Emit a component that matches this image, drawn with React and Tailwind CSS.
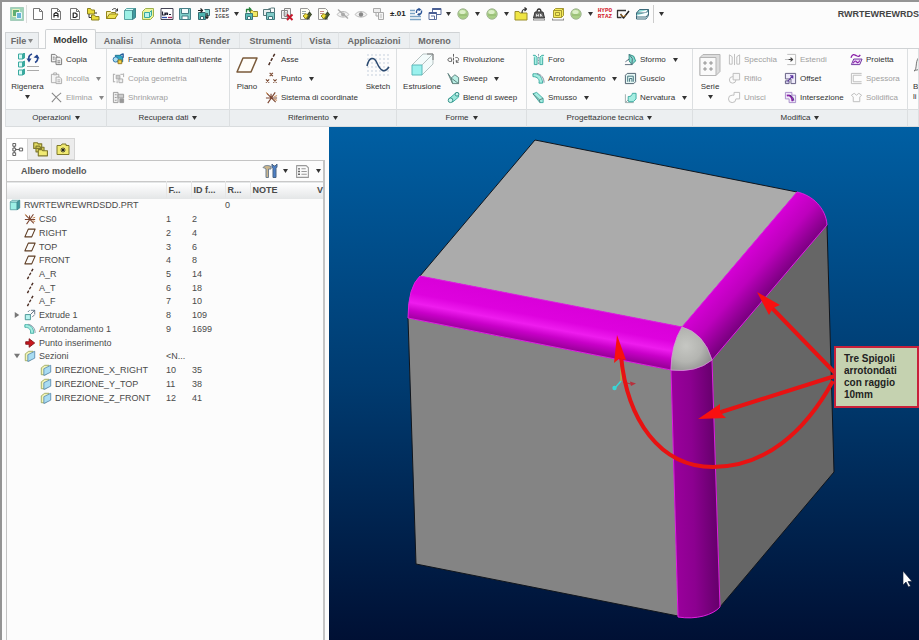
import React, { useState } from 'react';
import clsx from 'clsx';

const TEAL = '#3aa99f';
const MINT = '#9df0e6';

const Svg = ({ children, className = 'h-[13px] w-[13px]', box = '0 0 14 14' }) => (
  <svg
    viewBox={box}
    className={clsx('shrink-0', className)}
    fill="none"
    stroke="#555"
    strokeWidth="1"
    strokeLinejoin="round"
    aria-hidden="true"
  >
    {children}
  </svg>
);

const Caret = ({ muted }) => (
  <svg viewBox="0 0 5 4" className="h-1 w-[5px] shrink-0" aria-hidden="true">
    <path d="M0 0h5L2.500 4z" fill={muted ? '#888' : '#333'} />
  </svg>
);

/* ---------- quick access icons ---------- */

const Page = ({ mark }) => (
  <>
    <path d="M2.500 1.500h6l3 3v8h-9z" fill="#fff" stroke="#777" />
    <path d="M8.500 1.500v3h3" stroke="#777" />
    {mark === 'A' && <path d="M5 10.500V7l2-1.500L9 7v3.500M5 8.500h4" stroke="#222" strokeWidth="1.200" />}
    {mark === 'D' && <path d="M5.200 6h2L9 7.200v2.300l-1.800 1h-2z" stroke="#222" strokeWidth="1.200" />}
  </>
);

const Ball = () => (
  <>
    <circle cx="7" cy="7" r="5.200" fill="#a9cf86" stroke="#a3b795" />
    <ellipse cx="6.500" cy="5" rx="3.200" ry="2" fill="#dcefc8" stroke="none" />
    <path d="M3 8h8" stroke="#8fb46e" />
  </>
);

const Notes = ({ flag }) => (
  <>
    <path d="M1.500 1.500h7l2 2v9h-9z" fill="#fdfdf4" stroke="#999" />
    <path d="M3 4.500h4M3 6.500h3" stroke={flag} />
    <path d="M5.500 11l5-6 2 2.500L9 12z" fill="#4b5b31" stroke="#2d3b20" />
    <path d="M4 9l3-2.500 2 2L7 12z" fill="#f1e03a" stroke="#8d8420" />
  </>
);

const quickIcons = {
  part: (
    <>
      <path d="M1.500 3.500h8v9h-8z" fill={MINT} stroke="#5aa3a5" />
      <path d="M1.500 3.500l2-2h9l-3 2z" fill="#d6fbf7" stroke="#5aa3a5" />
      <path d="M9.500 12.500l3-2v-9l-3 2z" fill="#3f9aa0" stroke="#3d8589" />
    </>
  ),
  folders: (
    <>
      <path d="M1.500 1.500h3l1 1.500h3v4h-7z" fill="#e9dc3c" stroke="#8a8020" />
      <path d="M5.500 8h3l1 1.500h3.500V13H5.500z" fill="#e9dc3c" stroke="#8a8020" />
      <path d="M3 7v3.500h2M10 7V5" stroke="#333" />
    </>
  ),
  open: (
    <>
      <path d="M1.500 4.500h4l1 1h4v6h-9z" fill="#f7ef9d" stroke="#948519" />
      <path d="M1.500 11.500l3-4.500h8.500l-3 4.500z" fill="#ece04a" stroke="#948519" />
      <path d="M7 3c2-2 4-2 5 .5M12.500 1.500v2.500h-2.500" stroke="#333" />
    </>
  ),
  boxed: (
    <>
      <path d="M1.500 4.500l3-3h8v8l-3 3h-8z" fill="#eef59b" stroke="#9db04e" />
      <path d="M3.500 5.500h5v5h-5zM8.500 5.500l2-2v5l-2 2" fill="#bdf3ee" stroke={TEAL} />
    </>
  ),
  monitor: (
    <>
      <path d="M1 1.500h12v11H1z" fill="#fff" stroke="#445" />
      <path d="M2.500 4.500v3.500h2.500V5.500M6 8V6h1.500v2M9 7.500h2" stroke="#223" strokeWidth="1.200" />
      <path d="M2 10.500h5" stroke="#2e4fae" strokeWidth="1.300" />
      <path d="M8 10.500h4" stroke="#a82a5c" strokeWidth="1.300" />
    </>
  ),
  save: (
    <>
      <path d="M1.500 1.500h11v11h-11z" fill="#7ecdc8" stroke="#457e86" />
      <path d="M3.500 1.500h7v5h-7z" fill="#f3fbfb" stroke="#457e86" />
      <path d="M4 9h6v3.500H4z" fill="#fff" stroke="#457e86" />
    </>
  ),
  saveCopy: (
    <>
      <path d="M1.500 5.500h7v7h-7z" fill="#4cb5b0" stroke="#376b73" />
      <path d="M3.500 9.500h3v3h-3z" fill="#fff" stroke="#376b73" />
      <path d="M7.500 2.500h5v6h-3" fill="#8ed8d3" stroke="#376b73" />
      <path d="M1 3.500h4M3.500 1.500l2 2-2 2M10 6v5M8.500 9.500l1.500 2 1.500-2" stroke="#222" strokeWidth="1.200" />
    </>
  ),
  export: (
    <>
      <path d="M6.500 3.500h2l1 1h4v5h-7z" fill="#f3ea68" stroke="#998b28" />
      <path d="M1.500 6.500h7v6h-7z" fill="#59bdb7" stroke="#3d777c" />
      <path d="M3.500 9.500h3v3h-3z" fill="#fff" stroke="#3d777c" />
      <path d="M2.500 5.500v-3h4M5 .5l2 2-2 2" stroke="#25803a" strokeWidth="1.300" />
    </>
  ),
  mirrorSave: (
    <>
      <path d="M1.500 2.500h7v6h-7z" fill="#e8eeee" stroke="#56787b" />
      <path d="M4.500 5.500h8v7h-8z" fill="#7fcac6" stroke="#3f777b" />
      <path d="M6.500 9.500h4v3h-4z" fill="#fff" stroke="#3f777b" />
      <path d="M5.500 2.500l4-1.500h3v4.500" stroke="#56787b" />
    </>
  ),
  erase: (
    <>
      <path d="M1.500 3.500h6v8h-6zM4.500 1.500h6v8h-6z" fill="#f2f2f2" stroke="#888" />
      <path d="M3 6h5M3 8h5" stroke="#aaa" />
      <path d="M7 7.500l5.500 5.500M12.500 7.500L7 13" stroke="#c5162a" strokeWidth="1.900" />
    </>
  ),
  notesA: <Notes flag="#9aa" />,
  notesB: <Notes flag="#c88" />,
  hide: (
    <>
      <path d="M1 7.500c3-4 9-4 12 0-3 3.500-9 3.500-12 0z" fill="#f1f1f1" stroke="#bbb" />
      <circle cx="7" cy="7.500" r="2" fill="#aaa" stroke="none" />
      <path d="M2 2.500l10 9" stroke="#aaa" strokeWidth="1.300" />
    </>
  ),
  show: (
    <>
      <path d="M1 7.500c3-4 9-4 12 0-3 3.500-9 3.500-12 0z" fill="#f1f1f1" stroke="#bbb" />
      <circle cx="7" cy="7.500" r="2.200" fill="#888" stroke="none" />
    </>
  ),
  layers: (
    <>
      <path d="M1.500 1.500h7v4h-7z" fill="#eee" stroke="#aaa" />
      <path d="M6.500 5.500h5v7h-5zM4 5.500V9h2.500" fill="#f3f3f3" stroke="#aaa" />
      <path d="M8 8h2M8 10h2" stroke="#bbb" />
    </>
  ),
  regen: (
    <>
      <path d="M1 3.500h5M1 6.500h5M1 9.500h11M1 12.500h11" stroke="#7ba3c4" strokeWidth="1.500" />
      <path d="M7.500 6C7 3 9 1.500 11 2.500M12.500 3.500c.5 2.500-1 4-3 4" stroke="#2c5596" strokeWidth="1.400" />
      <path d="M9.500 .8l3 2-3 1.500zM10.500 5.800l-2.500 1.600 2.500 1.500z" fill="#2c5596" stroke="none" />
    </>
  ),
  windows: (
    <>
      <path d="M4.500 1.500h8.500v6H4.500z" fill="#fff" stroke="#5c6f9c" />
      <path d="M4.500 2h8.500" stroke="#4a5f94" strokeWidth="2" />
      <path d="M1 5.500h7.500v7H1z" fill="#fff" stroke="#5c6f9c" />
      <path d="M1 6h7.500" stroke="#4a5f94" strokeWidth="2" />
      <path d="M3 9h3.500v3.500" stroke="#5c6f9c" />
    </>
  ),
  ball: <Ball />,
  folderUp: (
    <>
      <path d="M1 4.500h4l1 1.500h7v7H1z" fill="#efe545" stroke="#9a8e2a" />
      <path d="M8 6c0-3 1-4 4-4M10.500 .5l2 1.500-2 2" stroke="#333" strokeWidth="1.200" />
    </>
  ),
  weight: (
    <>
      <path d="M3 5h8l1.500 6h-11z" fill="#666" stroke="#333" />
      <path d="M5 5c0-4 4-4 4 0" stroke="#333" strokeWidth="1.300" />
      <path d="M4.500 9.500V7.500l1 1 1-1v2M8.500 9.500V7l1.500 2.500" stroke="#fff" strokeWidth=".8" />
      <path d="M1 13h12M1.500 11.500V13M12.500 11.500V13" stroke="#888" />
    </>
  ),
  bbox: (
    <>
      <path d="M2.500 3.500l2-2h8v7l-2 2h-8z" fill="#f3ea5c" stroke="#a59932" />
      <path d="M2.500 3.500h8v7M10.500 3.500l2-2M4.500 8.500h4v-3h-4z" stroke="#a59932" />
      <path d="M1 13h12M1.500 11.500V13M12.500 11.500V13" stroke="#888" />
    </>
  ),
  check: (
    <>
      <path d="M10 3.500H1.500v7h4" stroke="#333" strokeWidth="1.300" />
      <path d="M4.500 7l3 4L13 4" stroke="#222" strokeWidth="1.500" />
      <path d="M4.500 7l3 3 2-2" stroke="#d08a2b" />
    </>
  ),
  books: (
    <>
      <path d="M1.500 6l3-3.500h9L11 6zM1.500 6v2.500H11L13.500 5V2.500" fill="#8fdcd8" stroke="#3b6a7a" />
      <path d="M1.500 8.500V12H11l2.500-3.500V5M1.500 10H11l2.500-3" fill="#f8ffff" stroke="#3b6a7a" />
    </>
  ),
};

const quickItems = [
  'new', 'newA', 'newD', 'folders', 'open', 'part', 'boxed', 'monitor', 'save', 'saveCopy', 'step', '|v',
  'export', 'mirrorSave', 'erase', 'notesA', 'notesB', 'hide', 'show', 'layers', 'tol', 'regen', 'windows', '|v',
  'ball', '|v', 'ball', '|v', 'folderUp', 'weight', 'bbox', 'ball', '|v', 'hypo', 'check', 'books', '|', '|v',
];

const QuickItem = ({ id }) => {
  if (id === '|') return <span className="h-[18px] w-px bg-[#ccc]" />;
  if (id === '|v') {
    return (
      <button type="button" aria-label="Altro" className="flex w-[6px] justify-center">
        <Caret />
      </button>
    );
  }
  if (id === 'step') {
    return (
      <button type="button" className="flex w-[14px] justify-center text-center font-['Liberation_Mono',monospace] text-[6px] leading-[6px] text-[#222]">
        STEP IGES
      </button>
    );
  }
  if (id === 'hypo') {
    return (
      <button type="button" className="flex w-[14px] justify-center text-center font-['Liberation_Mono',monospace] text-[6px] leading-[6px] font-bold text-[#d3202c]">
        HYPO RTAZ
      </button>
    );
  }
  if (id === 'tol') {
    return (
      <button type="button" className="flex w-[14px] justify-center text-[8px] leading-3 font-bold text-[#222]">
        ±.01
      </button>
    );
  }
  return (
    <button type="button" aria-label={id} className="w-[14px]">
      <Svg className="h-[14px] w-[14px]">
        {id === 'new' && <Page />}
        {id === 'newA' && <Page mark="A" />}
        {id === 'newD' && <Page mark="D" />}
        {quickIcons[id]}
      </Svg>
    </button>
  );
};

/* ---------- ribbon icons ---------- */

const ic = {
  copy: (
    <g fill="#f2f2f2" stroke="#777">
      <path d="M1.500 1.500h4l2 2v6h-6z" />
      <path d="M6.500 4.500h4l2 2v6h-6z" />
      <path d="M8 8.500h3M8 10.500h3M3 4.500h2M3 6.500h2" />
    </g>
  ),
  paste: (
    <g fill="#f4f4f4" stroke="#aaa">
      <path d="M1.500 2.500h8v9h-8z" />
      <path d="M4 1h3v2H4zM6.500 5.500h4l2 2v5h-6z" />
      <path d="M8 8.500h3M8 10.500h3" />
    </g>
  ),
  remove: <path d="M2 2l10 10M12 2C9 4 5 8 2 12" stroke="#888" strokeWidth="1.200" />,
  udf: (
    <>
      <path d="M3.500 2.500h6l2 2v5h-6z" fill="#2da7c4" stroke="#1b6f8c" />
      <circle cx="4" cy="7" r="2.800" fill="#a8dff0" stroke="#2c6fa8" />
      <path d="M6.500 7.500h4v4h-4z" fill="#f0d64a" stroke="#99741b" />
      <path d="M9 2l3-1v4" stroke="#235c9c" strokeWidth="1.500" />
    </>
  ),
  copyGeom: (
    <g stroke="#aaa">
      <path d="M1.500 2v9M1.500 2.500h2M1.500 10.500h2M12.500 1.500v4" />
      <path d="M4.500 3.500h4v4h-4z" fill="#ccc" />
      <path d="M7.500 7.500h4v4h-4z" fill="#eee" />
      <path d="M9 2.500h3M5.500 9v3" />
    </g>
  ),
  shrink: (
    <g stroke="#999">
      <path d="M1.500 1.500h5v11h-5z" fill="#eee" />
      <path d="M6.500 3.500h6v4h-6z" fill="#ccc" />
      <path d="M8.500 8.500h4v4h-4z" fill="#999" />
      <path d="M3 4h2M3 7h2M3 10h2" />
    </g>
  ),
  axis: <path d="M10.500 1L8.800 4M8 5.500L6.300 8.500M5.500 10L4 13" stroke="#4a2c22" strokeWidth="1.600" />,
  point: (
    <path
      d="M5 1l3.500 3.500M8.500 1L5 4.500M1 8l3.500 3.500M4.500 8L1 11.500M9 8l3.500 3.500M12.500 8L9 11.500"
      stroke="#7b4a32"
      strokeWidth="1.200"
    />
  ),
  csys: (
    <>
      <path d="M2 2.500l9.500 9.500M11 1.500L3 13M1 7.500h12M6.500 3v5" stroke="#7b4530" strokeWidth="1.200" />
      <path d="M1 1.500l2.500 2M10 6l3-1M10 9l3 1" stroke="#c07a3c" />
    </>
  ),
  revolve: (
    <>
      <path d="M7 1v12" stroke="#555" strokeDasharray="3 1" />
      <path d="M5 5.500C2 5 .8 6 1 7.500s2 2 4 1.500V6" />
      <path d="M9 5c4-1 5 3 1 4.500M10 7.500v2.500h2.500" />
    </>
  ),
  sweep: (
    <>
      <path d="M1 1.500l3.500 5 4-3.500 4 3v6.500H6z" fill="#b9efe5" stroke="#5b7d79" />
      <path d="M4.500 6.500L12.500 12.500M4.500 6.500l1.500 6" stroke="#5b7d79" />
    </>
  ),
  blend: (
    <>
      <path d="M2 8.500L9 2.500h3.500v4L6 12" fill="#9ae6d9" stroke={TEAL} />
      <circle cx="3.800" cy="10" r="2.500" fill="#c8f5ee" stroke="#2c8c83" />
      <circle cx="10.800" cy="3.500" r="2" fill="#c8f5ee" stroke="#2c8c83" />
    </>
  ),
  hole: (
    <>
      <path d="M1 2.500h2.500l2 2v8h-3v-8M13 2.500h-2.500l-2 2v8h3v-8" fill="#a9efe4" stroke={TEAL} />
      <path d="M7 1v12" stroke="#89a" strokeDasharray="2 1" />
    </>
  ),
  round: (
    <>
      <path d="M1 2c5-1 10 2 10.500 10h-4C8.500 8 6 5 1 5z" fill="#a5eee2" stroke={TEAL} />
      <path d="M5 1.500c5 1 8 5 8 10" stroke="#789" />
    </>
  ),
  chamfer: (
    <>
      <path d="M1 3l4-1.500L12 8v4.500H8.500z" fill="#a5eee2" stroke={TEAL} />
      <path d="M1 3l7 6.500L12 8M8 9.500l.5 3" stroke="#57807d" />
    </>
  ),
  draft: (
    <>
      <path d="M5.500 1.500l5 2 2 5-4 4-3-4z" fill="#7fdccf" stroke="#2c8c83" />
      <path d="M1 12.500h8M1.500 9.500l4-3M5.500 1.500L9 6l-.5 6.500" stroke="#567" />
    </>
  ),
  shell: (
    <>
      <path d="M1.500 3.500l2-2h9v9l-2 2h-9z" fill="#e5f7f4" stroke="#4a5b6a" />
      <path d="M4 10.500V4.500h6v6M6 10.500V7h2.500v3.500" stroke="#3c6f7a" />
    </>
  ),
  rib: (
    <>
      <path d="M1.500 3.500v9h9M1.500 12.500l3-3" stroke="#9aa" />
      <path d="M4.500 9.500V6c3 0 4-1 4.500-3.500h4v6l-3 3h-5z" fill="#a5eee2" stroke={TEAL} />
    </>
  ),
  mirror: <path d="M1.500 2l3 2v8h-3zM12.500 2l-3 2v8h3zM7 1v12" stroke="#bbb" />,
  trim: (
    <g stroke="#bbb">
      <circle cx="5" cy="8.500" r="3.500" />
      <path d="M5.500 1.500h7v7h-7z" fill="#f7f7f7" />
    </g>
  ),
  merge: (
    <g stroke="#bbb">
      <path d="M6.500 1.500h6v7h-4a4 4 0 1 1-4-4h2z" />
    </g>
  ),
  extend: (
    <>
      <path d="M3.500 1.500h9v11h-9" stroke="#bbb" />
      <path d="M1 7h6" stroke="#bbb" />
      <path d="M5 7h4M7 5l2.200 2L7 9" stroke="#444" strokeWidth="1.300" />
    </>
  ),
  offset: (
    <>
      <path d="M1.500 1.500h11v11h-5v-5h-6z" fill="#eeeafa" stroke="#5d587c" />
      <path d="M1.500 9.500h4v3h-4z" fill="#d5cdf0" stroke="#5d587c" />
      <path d="M4 10l5.500-6M6.500 4h3v3" stroke="#5b35a0" strokeWidth="1.200" />
    </>
  ),
  intersect: (
    <>
      <path d="M1.500 1.500h7v3h4v8h-7v-4h-4z" fill="#f1eafa" stroke="#a58bc8" />
      <path d="M3 5c4-1 6 2 6 6" stroke="#8a1fa8" strokeWidth="1.900" />
      <path d="M6 4.500c3 1 4.500 3 4.500 6" stroke="#3c2b78" />
    </>
  ),
  project: (
    <>
      <path d="M1 5c2-5 4-3 6-2s3 1 4-1" stroke="#8a1fa8" strokeWidth="1.400" />
      <path d="M4 6.500h9l-2.500 6H1.500z" fill="#ead8f6" stroke="#6b2e9c" />
      <path d="M3.500 11c2-4 3-2 4-1s2 0 3-2" stroke="#8a1fa8" strokeWidth="1.200" />
    </>
  ),
  thicken: <path d="M12.500 1.500h-11v11h11M12.500 3.500h-9v7h9" stroke="#bbb" />,
  solidify: <path d="M1.500 4.500l3-2 2.500 2 2.500-2 3 2-2 2v5h-7v-5z" stroke="#bbb" />,
};

const Regenerate = () => (
  <Svg className="h-6 w-6" box="0 0 24 24">
    {[1, 9, 17].map((y) => (
      <g key={y} stroke={TEAL}>
        <path d={`M2.500 ${y}h4v5h-4z`} fill="#d8faf6" />
        <path d={`M6.500 ${y}l2-1v5l-2 1`} fill={TEAL} />
      </g>
    ))}
    <path d="M13 8c-1-4 0-6 3-7M21 2.500c1.500 3 .5 6-2 7" stroke="#27478f" strokeWidth="1.600" />
    <path d="M10.500 5.500l2.500 4 2.500-4zM17.500 4.500l3.500-3 2.500 4z" fill="#27478f" stroke="none" />
    <path d="M11 13.500h12M11 17.500h12" stroke="#aaa" />
  </Svg>
);

const Plane = () => (
  <Svg className="h-6 w-6" box="0 0 24 24">
    <path d="M8 5h14l-6 14H2z" fill="#fffdf8" stroke="#7a5a3a" strokeWidth="1.500" />
  </Svg>
);

const Sketch = () => (
  <Svg className="h-6 w-6" box="0 0 24 24">
    {[2, 6, 10, 14, 18, 22].map((y) => (
      <path key={y} d={`M1.500 ${y}h22`} stroke="#8ea3bd" strokeDasharray="1 3" />
    ))}
    <path d="M1 13C3 4 8 3 11 10s7 11 12 4" stroke="#2c4a70" strokeWidth="1.500" />
  </Svg>
);

const Extrude = () => (
  <Svg className="h-6 w-6" box="0 0 24 24">
    <path d="M2 12L13 1h10v10L12 22M12 12L23 1" fill="#f3fbfb" stroke="#b5c1c1" />
    <path d="M17 1h6v6" stroke="#777" />
    <path d="M2 12h10v10H2z" fill="#9af1ee" stroke="#5bb9b9" />
  </Svg>
);

const Pattern = () => (
  <Svg className="h-6 w-6" box="0 0 24 24">
    <path d="M2 4.500L5 1.500h17v17l-4 4H2z" fill="#dcdcdc" stroke="#b5b5b5" />
    <path d="M2 4.500h16v18H2z" fill="#fafafa" stroke="#b5b5b5" />
    {[[7, 10], [13, 10], [7, 16], [13, 16]].map(([x, y]) => (
      <circle key={`${x}-${y}`} cx={x} cy={y} r="1.200" fill="#ccc" stroke="#999" />
    ))}
  </Svg>
);

const Boundary = () => (
  <Svg className="h-6 w-6" box="0 0 24 24">
    <path d="M1 18C5 16 1 6 8 3l12 10c-6 0-6 3-8 7C9 16 5 16 1 18z" fill="#f2f2f2" stroke="#777" />
  </Svg>
);

const Cmd = ({ icon, label, menu, off }) => (
  <button
    type="button"
    disabled={off}
    className={clsx(
      'flex h-[19px] items-center gap-[3px] text-[8px] leading-3 whitespace-nowrap',
      off ? 'text-[#a0a0a0]' : 'text-[#333]'
    )}
  >
    <Svg>{ic[icon]}</Svg>
    <span>{label}</span>
    {menu && (
      <span className="pl-1">
        <Caret muted={off} />
      </span>
    )}
  </button>
);

const Big = ({ icon, label, menu, className }) => (
  <button
    type="button"
    className={clsx('flex shrink-0 flex-col items-center pt-[3px] text-[8px] leading-3 text-[#333]', className)}
  >
    {icon}
    <span className="pt-1">{label}</span>
    {menu && (
      <span className="flex h-2 items-center">
        <Caret />
      </span>
    )}
  </button>
);

const Col = ({ items, className }) => (
  <div className={clsx('flex shrink-0 flex-col items-start', className)}>
    {items.map((item) => (
      <Cmd key={item.label} {...item} />
    ))}
  </div>
);

const Group = ({ title, className, children }) => (
  <section className={clsx('flex flex-col border-r border-[#dcdfe1]', className)}>
    <div className="flex h-[60px] items-start pt-px">{children}</div>
    <button
      type="button"
      aria-label={title || 'Superfici'}
      className="flex h-[18px] items-center justify-center gap-1 border-y border-[#d9dcde] bg-[#eceff1] text-[8px] leading-3 text-[#333]"
    >
      {title}
      {title && <Caret />}
    </button>
  </section>
);

const Ribbon = () => (
  <div className="flex overflow-hidden border-l border-[#dcdfe1]">
    <Group title="Operazioni" className="w-[101px] shrink-0">
      <Big icon={<Regenerate />} label="Rigenera" menu className="ml-[3px] w-[37px]" />
      <Col
        className="ml-1"
        items={[
          { icon: 'copy', label: 'Copia' },
          { icon: 'paste', label: 'Incolla', menu: true, off: true },
          { icon: 'remove', label: 'Elimina', menu: true, off: true },
        ]}
      />
    </Group>
    <Group title="Recupera dati" className="w-[123px] shrink-0">
      <Col
        className="ml-[5px]"
        items={[
          { icon: 'udf', label: "Feature definita dall'utente" },
          { icon: 'copyGeom', label: 'Copia geometria', off: true },
          { icon: 'shrink', label: 'Shrinkwrap', off: true },
        ]}
      />
    </Group>
    <Group title="Riferimento" className="w-[167px] shrink-0">
      <Big icon={<Plane />} label="Piano" className="w-[34px]" />
      <Col
        className="ml-px w-[95px]"
        items={[
          { icon: 'axis', label: 'Asse' },
          { icon: 'point', label: 'Punto', menu: true },
          { icon: 'csys', label: 'Sistema di coordinate' },
        ]}
      />
      <Big icon={<Sketch />} label="Sketch" className="w-[36px]" />
    </Group>
    <Group title="Forme" className="w-[130px] shrink-0">
      <Big icon={<Extrude />} label="Estrusione" className="ml-[3px] w-[44px]" />
      <Col
        className="ml-[3px]"
        items={[
          { icon: 'revolve', label: 'Rivoluzione' },
          { icon: 'sweep', label: 'Sweep', menu: true },
          { icon: 'blend', label: 'Blend di sweep' },
        ]}
      />
    </Group>
    <Group title="Progettazione tecnica" className="w-[166px] shrink-0">
      <Col
        className="ml-[5px] w-[92px]"
        items={[
          { icon: 'hole', label: 'Foro' },
          { icon: 'round', label: 'Arrotondamento', menu: true },
          { icon: 'chamfer', label: 'Smusso', menu: true },
        ]}
      />
      <Col
        items={[
          { icon: 'draft', label: 'Sformo', menu: true },
          { icon: 'shell', label: 'Guscio' },
          { icon: 'rib', label: 'Nervatura', menu: true },
        ]}
      />
    </Group>
    <Group title="Modifica" className="w-[215px] shrink-0">
      <Big icon={<Pattern />} label="Serie" menu className="w-[34px]" />
      <Col
        className="ml-px w-[56px]"
        items={[
          { icon: 'mirror', label: 'Specchia', off: true },
          { icon: 'trim', label: 'Rifilo', off: true },
          { icon: 'merge', label: 'Unisci', off: true },
        ]}
      />
      <Col
        className="w-[66px]"
        items={[
          { icon: 'extend', label: 'Estendi', off: true },
          { icon: 'offset', label: 'Offset' },
          { icon: 'intersect', label: 'Intersezione' },
        ]}
      />
      <Col
        items={[
          { icon: 'project', label: 'Proietta' },
          { icon: 'thicken', label: 'Spessora', off: true },
          { icon: 'solidify', label: 'Solidifica', off: true },
        ]}
      />
    </Group>
    <Group title="" className="min-w-0 flex-1 overflow-hidden">
      <button type="button" className="ml-[5px] pt-[3px] text-left text-[8px] leading-[10px] text-[#333]">
        <Boundary />
        <span className="block pt-[5px]">B</span>
        <span className="block">li</span>
      </button>
    </Group>
  </div>
);

/* ---------- model tree ---------- */

const treeIcons = {
  part: quickIcons.part,
  csys: ic.csys,
  plane: <path d="M5 2.500h8l-4 9H1z" stroke="#5e3c22" strokeWidth="1.300" />,
  axis: ic.axis,
  extrude: (
    <>
      <path d="M1.500 6.500h6v6h-6z" fill="#b9f4f0" stroke="#3c8b8b" />
      <path d="M4.500 3.500l2-2M9.500 9.500l3-3M7.500 6.500l5-5M8 1.500h4.500V6" stroke="#567" />
    </>
  ),
  round: ic.round,
  insert: <path d="M2 5.500h4V2l6.500 5L6 12V8.500H2z" fill="#c8171f" stroke="#7f1015" />,
  section: (
    <>
      <path d="M1.500 4.500l4-3h5v8l-4 3h-5z" fill="#f3f5b8" stroke="#9aa65a" />
      <path d="M4.500 5.500l8-4v8l-8 4z" fill="#a9dcf2" stroke="#5a8ab0" />
    </>
  ),
};

const treeRows = [
  { icon: 'part', name: 'RWRTEWREWRDSDD.PRT', level: 0, r: '0' },
  { icon: 'csys', name: 'CS0', level: 1, n: '1', id: '2' },
  { icon: 'plane', name: 'RIGHT', level: 1, n: '2', id: '4' },
  { icon: 'plane', name: 'TOP', level: 1, n: '3', id: '6' },
  { icon: 'plane', name: 'FRONT', level: 1, n: '4', id: '8' },
  { icon: 'axis', name: 'A_R', level: 1, n: '5', id: '14' },
  { icon: 'axis', name: 'A_T', level: 1, n: '6', id: '18' },
  { icon: 'axis', name: 'A_F', level: 1, n: '7', id: '10' },
  { icon: 'extrude', name: 'Extrude 1', level: 1, n: '8', id: '109', toggle: 'closed' },
  { icon: 'round', name: 'Arrotondamento 1', level: 1, n: '9', id: '1699' },
  { icon: 'insert', name: 'Punto inserimento', level: 1 },
  { icon: 'section', name: 'Sezioni', level: 1, n: '<N...', toggle: 'open' },
  { icon: 'section', name: 'DIREZIONE_X_RIGHT', level: 2, n: '10', id: '35' },
  { icon: 'section', name: 'DIREZIONE_Y_TOP', level: 2, n: '11', id: '38' },
  { icon: 'section', name: 'DIREZIONE_Z_FRONT', level: 2, n: '12', id: '41' },
];

const levelPad = ['pl-[2px]', 'pl-[6px]', 'pl-[33px]'];

const Columns = () => (
  <colgroup>
    <col className="w-[159px]" />
    <col className="w-[25px]" />
    <col className="w-[34px]" />
    <col className="w-[25px]" />
    <col className="w-[67px]" />
    <col />
  </colgroup>
);

const ModelTree = () => (
  <aside className="flex w-[323px] shrink-0 flex-col pt-[11px]">
    <div className="flex h-[22px]">
      <button type="button" aria-label="Struttura" className="flex w-[22px] items-center justify-center border border-b-0 border-[#d5d5d5] bg-white">
        <Svg>
          <path d="M2 .5h3v3H2zM2 5.500h3v3H2zM2 10.500h3v3H2zM9 5.500h3.500v3H9zM5 7h4M3.500 3.500v2M3.500 8.500v2" />
        </Svg>
      </button>
      <button type="button" aria-label="Cartelle" className="flex w-6 items-center justify-center border-y border-r border-[#d5d5d5] bg-[#ececec]">
        <Svg className="h-4 w-4">
          <path d="M1.500 1.500h3l1 1h3v4h-7zM3.500 4.500h3l1 1h3v4h-7z" fill="#e5dd62" stroke="#7f782b" />
          <path d="M5.500 7.500h3l1 1h4v4.500h-8z" fill="#f1ea72" stroke="#7f782b" />
        </Svg>
      </button>
      <button type="button" aria-label="Preferiti" className="flex w-[23px] items-center justify-center border-y border-r border-[#d5d5d5] bg-[#ececec]">
        <Svg className="h-[14px] w-[14px]">
          <path d="M1 3.500h4l1-1.500h4v1.500h3v9H1z" fill="#f1ea72" stroke="#7f782b" />
          <path d="M7 5.500v5M4.500 8h5M5.300 6.300l3.400 3.400M8.700 6.300L5.300 9.700" stroke="#222" />
        </Svg>
      </button>
    </div>
    <div className="mr-1 flex flex-1 flex-col border-t border-r-2 border-l border-[#c4c4c4]">
      <div className="flex h-5 items-center pr-[2px] pl-[14px]">
        <h2 className="flex-1 text-[9px] leading-3 font-bold text-[#555]">Albero modello</h2>
        <button type="button" aria-label="Impostazioni" className="flex items-center gap-[5px]">
          <Svg className="h-4 w-4" box="0 0 16 16">
            <path d="M1 4.500C3 2 6 2 9 3.500V6H6.500v8.500H4V6C3 5 2 5 1 4.500z" fill="#c9b48a" stroke="#6f7f90" />
            <path d="M10 1v3l1 1.500V14.500h3V5.500L15 4V1l-2 2h-1z" fill="#4c7fc6" stroke="#4b6483" />
          </Svg>
          <Caret />
        </button>
        <button type="button" aria-label="Mostra" className="ml-[7px] flex items-center gap-[6px]">
          <Svg className="h-[15px] w-[15px]">
            <path d="M1.500 1.500h9l2 2v9h-11z" fill="#fafafa" stroke="#999" />
            <path d="M3 4.500h1.500M3 7h1.500M3 9.500h1.500" stroke="#444" strokeWidth="1.300" />
            <path d="M6 4.500h4M6 7h5M6 9.500h5" stroke="#999" />
          </Svg>
          <Caret />
        </button>
      </div>
      <table className="w-full table-fixed border-collapse text-left text-[9px] leading-3 text-[#4a4a4a]">
        <Columns />
        <thead>
          <tr className="h-[17px] border-t border-[#c9c9c9] bg-linear-to-b from-white to-[#e4e6e7] font-bold">
            <th scope="col" aria-label="Nome" />
            <th scope="col" className="border-l border-[#e6e6e6] pl-[2px]">F...</th>
            <th scope="col" className="border-l border-[#e6e6e6] pl-[2px]">ID f...</th>
            <th scope="col" className="border-l border-[#e6e6e6] pl-[2px]">R...</th>
            <th scope="col" className="border-l border-[#e6e6e6] pl-[2px]">NOTE</th>
            <th scope="col" className="p-0">V</th>
          </tr>
        </thead>
      </table>
      <table className="h-[206px] w-full table-fixed border-collapse text-left text-[9px] leading-3 text-[#4a4a4a]">
        <Columns />
        <tbody>
          {treeRows.map((row) => (
            <tr key={row.name}>
              <td className="p-0">
                <div className={clsx('flex h-3 items-center gap-[3px] whitespace-nowrap', levelPad[row.level])}>
                  {row.level === 1 && (
                    <span className="flex w-2 justify-center">
                      {row.toggle && (
                        <svg viewBox="0 0 8 8" className="h-[6px] w-[6px] shrink-0" aria-hidden="true">
                          <path d={row.toggle === 'open' ? 'M0 1h8L4 7z' : 'M1 0l6 4-6 4z'} fill="#777" />
                        </svg>
                      )}
                    </span>
                  )}
                  <Svg className="h-3 w-3">{treeIcons[row.icon]}</Svg>
                  <span>{row.name}</span>
                </div>
              </td>
              <td className="p-0">{row.n}</td>
              <td className="p-0 pl-px">{row.id}</td>
              <td className="p-0">{row.r}</td>
              <td className="p-0" />
              <td className="p-0" />
            </tr>
          ))}
        </tbody>
      </table>
    </div>
  </aside>
);

/* ---------- graphics area ---------- */

const Scene = () => (
  <svg viewBox="329 127 590 513" className="block h-[513px] w-[590px]" fill="none" role="img" aria-label="Cubo con tre spigoli arrotondati">
    <defs>
      <linearGradient id="edgeFront" gradientUnits="userSpaceOnUse" x1="535" y1="298" x2="527" y2="341">
        <stop offset="0" stopColor="#d900d9" />
        <stop offset=".4" stopColor="#de02de" />
        <stop offset=".62" stopColor="#ee1cee" />
        <stop offset=".8" stopColor="#c800c8" />
        <stop offset="1" stopColor="#9c009c" />
      </linearGradient>
      <linearGradient id="edgeSide" gradientUnits="userSpaceOnUse" x1="740" y1="258" x2="774" y2="288">
        <stop offset="0" stopColor="#d600d6" />
        <stop offset=".45" stopColor="#bd00bd" />
        <stop offset="1" stopColor="#78007e" />
      </linearGradient>
      <linearGradient id="edgeDown" gradientUnits="userSpaceOnUse" x1="674" y1="490" x2="716" y2="489">
        <stop offset="0" stopColor="#9a009c" />
        <stop offset=".45" stopColor="#8c0090" />
        <stop offset="1" stopColor="#66006c" />
      </linearGradient>
      <radialGradient id="corner" gradientUnits="userSpaceOnUse" cx="686" cy="346" r="32">
        <stop offset="0" stopColor="#c6c7c3" />
        <stop offset=".5" stopColor="#b4b5b1" />
        <stop offset="1" stopColor="#858585" />
      </radialGradient>
    </defs>

    <path d="M535 140L797 192L682 327L420 276z" fill="#ababab" />
    <path d="M408 318L671 370L678 616L416 564z" fill="#848484" />
    <path d="M827 225L712 360L720 607L834 472z" fill="#666" />
    <path d="M420 276L535 140L797 192M827 225L834 472L720 607M678 616L416 564L408 318" stroke="#10151c" />

    <g stroke="#e020e0">
      <path d="M420 276L682 327Q671 345 671 370L408 318Q408 287 420 276z" fill="url(#edgeFront)" />
      <path d="M682 327L797 192C812 195 826 208 827 225L712 360Q704 333 682 327z" fill="url(#edgeSide)" />
      <path d="M671 370Q696 373 712 360L720 607C713 615 696 620 678 617z" fill="url(#edgeDown)" />
    </g>
    <path d="M682 327Q671 345 671 370Q696 373 712 360Q704 333 682 327z" fill="url(#corner)" stroke="#d9a5d9" strokeWidth=".6" />

    <path d="M615 388l6-7" stroke="#38d6d6" strokeWidth="1.500" />
    <circle cx="614.500" cy="388" r="2.200" fill="#38d6d6" />
    <path d="M621 381v-14" stroke="#c9b32a" />
    <path d="M623 382l8 2" stroke="#b8303c" />
    <path d="M630 381.500l6 2-5 2.500z" fill="#b8303c" />

    <g stroke="#e81212" strokeWidth="4">
      <path d="M835 373L771 307" />
      <path d="M835 376L718 413" />
      <path d="M833 381C805 432 765 467 713 467C660 467 627 420 621 356" />
    </g>
    <g fill="#f81010">
      <path d="M757 292L780 305L773 308L769 315z" />
      <path d="M698 419L720 404L720 412L726 418z" />
      <path d="M617 335L626 360L620 358L614 363z" />
    </g>

    <path d="M903 571v14l3-3 2.500 5 2-1-2.500-4.500h4z" fill="#fff" stroke="#0b1830" strokeWidth=".6" />
  </svg>
);

const tabs = [
  { name: 'Analisi', cls: 'w-[46px]' },
  { name: 'Annota', cls: 'w-[48px]' },
  { name: 'Render', cls: 'w-[50px]' },
  { name: 'Strumenti', cls: 'w-[62px]' },
  { name: 'Vista', cls: 'w-[37px]' },
  { name: 'Applicazioni', cls: 'w-[71px]' },
  { name: 'Moreno', cls: 'w-[50px]' },
];

const App = () => {
  const [active, setActive] = useState('Modello');

  return (
    <div className="flex min-h-screen flex-col overflow-hidden border-t-2 border-l-2 border-[#949494] bg-[#fcfcfc] font-['Liberation_Sans',Arial,sans-serif]">
      <header className="flex h-[27px] items-center overflow-hidden pb-[3px] pl-2">
        <button type="button" aria-label="Applicazione" className="w-4 shrink-0">
          <Svg className="h-[14px] w-[14px]">
            <path d="M.5.5h13v13H.5z" fill="#9fd4b8" stroke="#a5cdbb" />
            <path d="M2.500 2.500h7v7h-7z" fill="#5fae72" stroke="#e8f2c0" />
            <path d="M6.500 5.500h5v6h-5z" fill="#6ab4d6" stroke="#e8f6fa" />
          </Svg>
        </button>
        <span className="h-[18px] w-px bg-[#ddd]" />
        <div className="ml-1 flex w-[634px] shrink-0 items-center justify-between">
          {quickItems.map((id, i) => (
            <QuickItem key={`${id}-${i}`} id={id} />
          ))}
        </div>
        <h1 className="ml-auto shrink-0 text-[9px] leading-3 font-bold text-[#444]">RWRTEWREWRDS</h1>
      </header>

      <nav className="ml-[3px] flex h-5 items-end border-b border-[#cfd2d4] text-[9px] leading-3 font-bold text-[#6a6a6a]">
        <button type="button" className="flex h-4 w-[34px] items-center justify-center gap-[2px] border border-b-0 border-[#cfd2d4] bg-[#eceff1]">
          File
          <Caret muted />
        </button>
        <button
          type="button"
          onClick={() => setActive('Modello')}
          className="-mb-px ml-[6px] h-5 w-[51px] rounded-t-xs border border-b-0 border-[#cfd2d4] bg-[#fcfcfc] pt-px text-[#333]"
        >
          Modello
        </button>
        {tabs.map((tab) => (
          <button
            key={tab.name}
            type="button"
            onClick={() => setActive(tab.name)}
            className={clsx(
              'h-4 border-t border-r border-t-[#cfd2d4] border-r-[#e0e3e5] bg-[#eceff1]',
              tab.cls,
              active === tab.name && 'text-[#333]'
            )}
          >
            {tab.name}
          </button>
        ))}
      </nav>

      <div className="pl-[3px]">
        <Ribbon />
      </div>

      <main className="flex flex-1">
        <div className="flex w-[327px] shrink-0 pl-1">
          <ModelTree />
        </div>
        <div className="flex-1 overflow-hidden bg-linear-to-b from-[#005fa3] via-[#003b70] to-[#001034]">
          <div className="relative h-[513px] w-[590px]">
            <Scene />
            <p className="absolute top-[219px] left-[505px] w-[85px] border-2 border-[#c8203a] bg-[#c5d2b0] py-[5px] pl-2 text-[10px] leading-3 font-bold text-[#222]">
              Tre Spigoli
              <br />
              arrotondati
              <br />
              con raggio
              <br />
              10mm
            </p>
          </div>
        </div>
      </main>
    </div>
  );
};

export default App;
